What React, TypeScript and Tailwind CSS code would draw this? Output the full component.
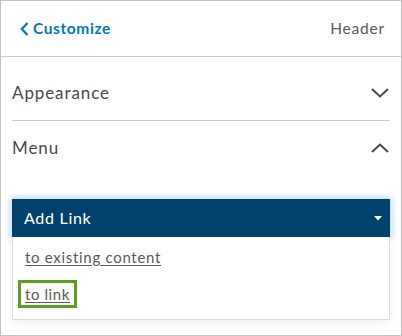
import React from "react";

function ChevronDown({ up = false }: { up?: boolean }) {
  return (
    <svg width="18" height="10" viewBox="0 0 18 10" className="text-[#4a4a4a]">
      <polyline
        points={up ? "1,9 9,1.5 17,9" : "1,1 9,8.5 17,1"}
        fill="none"
        stroke="currentColor"
        strokeWidth="2"
      />
    </svg>
  );
}

export default function App() {
  return (
    <div
      className="w-[402px] h-[336px] bg-white border border-[#c4c4c4] flex flex-col"
      style={{ fontFamily: "Lato, 'Noto Sans', sans-serif" }}
    >
      {/* top bar */}
      <div className="h-[56px] shrink-0 flex items-center justify-between pl-[19px] pr-[16px] border-b border-[#cccccc]">
        <button className="flex items-center gap-[4px] text-[#0079c1] font-bold text-[15.5px] tracking-[0.6px]">
          <svg width="9" height="14" viewBox="0 0 9 14">
            <polyline points="7.5,1 1.8,7 7.5,13" fill="none" stroke="currentColor" strokeWidth="2.2" />
          </svg>
          Customize
        </button>
        <span className="text-[#595959] text-[15.5px] tracking-[0.8px]">Header</span>
      </div>

      <div className="px-[11px]">
        {/* Appearance */}
        <div className="h-[64px] flex items-center justify-between border-b border-[#cccccc] pt-[8px]">
          <span className="text-[17px] text-[#4a4a4a] tracking-[0.9px]">Appearance</span>
          <span className="mr-[1px]">
            <ChevronDown />
          </span>
        </div>

        {/* Menu */}
        <div className="h-[54px] flex items-center justify-between">
          <span className="text-[17px] text-[#4a4a4a] tracking-[0.9px]">Menu</span>
          <span className="mr-[1px]">
            <ChevronDown up />
          </span>
        </div>

        <div className="mt-[24px] shadow-[0_4px_10px_rgba(0,0,0,0.06)]">
          <div className="h-[38px] bg-[#00426b] flex items-center justify-between pl-[12px] pr-[8px] shadow-[0_0_6px_2px_rgba(120,190,230,0.45)]">
            <span className="text-white text-[16px] tracking-[0.7px]">Add Link</span>
            <svg width="8" height="5" viewBox="0 0 8 5">
              <polygon points="0,0 8,0 4,4.5" fill="white" />
            </svg>
          </div>
          <div className="border border-t-0 border-[#dddddd] bg-white pt-[10px] pb-[11px]">
            <div className="px-[12px] h-[20px] flex items-center">
              <a className="text-[15px] text-[#5a5a5a] underline underline-offset-2 tracking-[0.7px]">to existing content</a>
            </div>
            <div className="mt-[13px] ml-[5px] w-fit border-[3px] border-[#5b9e22] pl-[4px] pr-[4px] h-[28px] flex items-center">
              <a className="text-[15px] text-[#5a5a5a] underline underline-offset-2 tracking-[0.6px]">to link</a>
            </div>
          </div>
        </div>
      </div>
    </div>
  );
}
